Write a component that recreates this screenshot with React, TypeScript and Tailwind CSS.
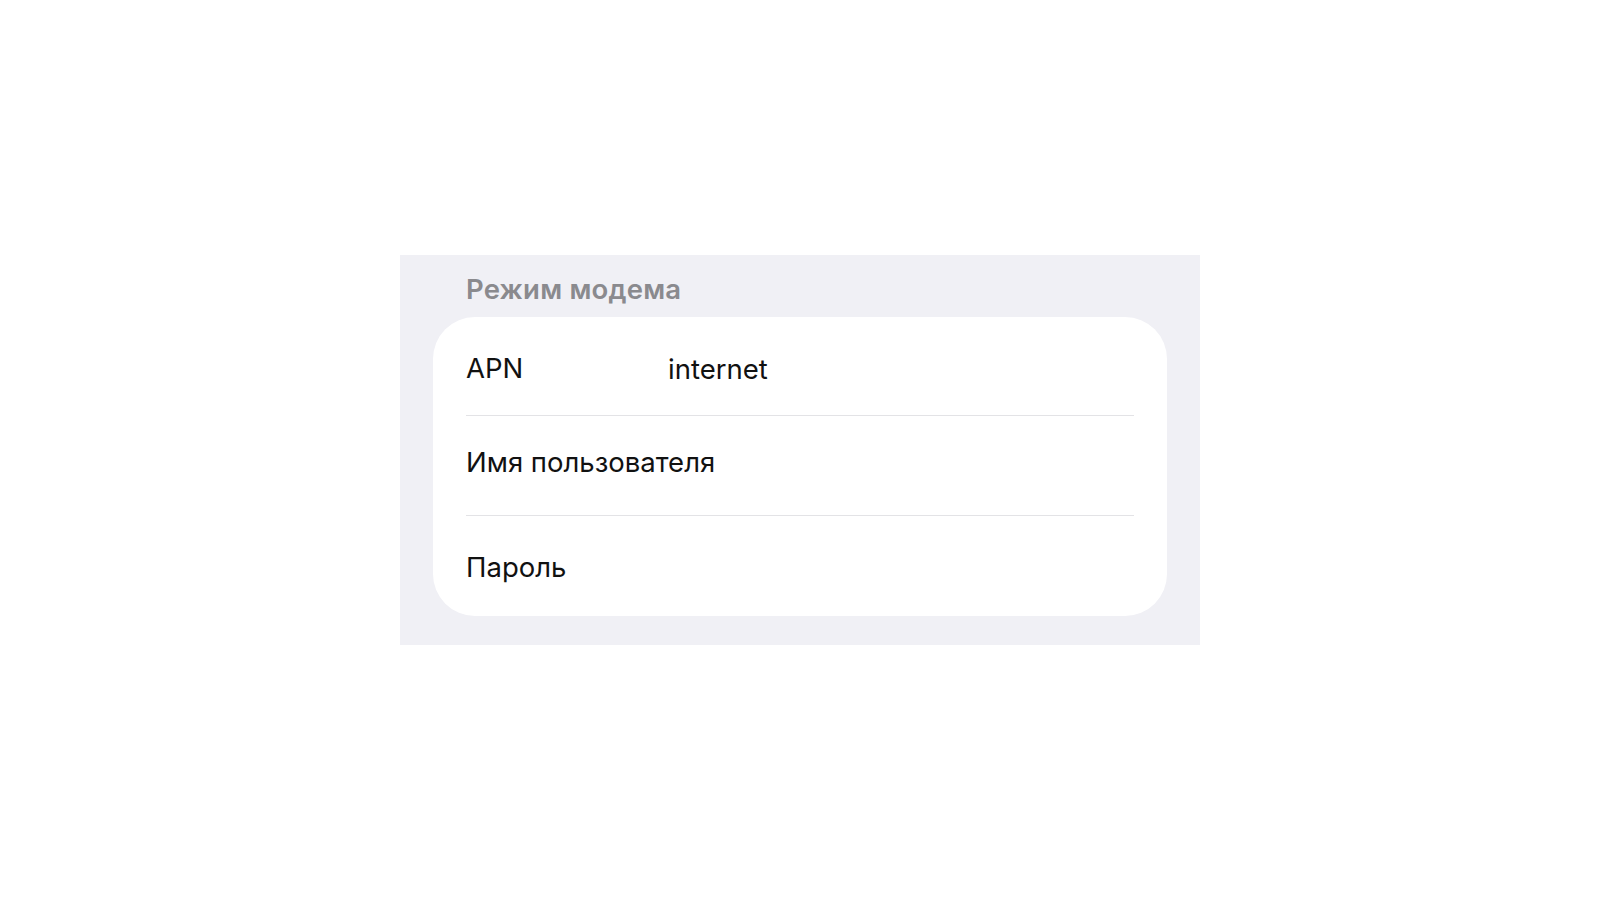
import React from "react";

export default function App() {
  const font = { fontFamily: "Inter, 'Noto Sans', sans-serif" };
  return (
    <div className="w-full h-screen bg-white flex items-center justify-center" style={font}>
      <div className="w-[800px] h-[390px] bg-[#f0f0f5] px-[33px] flex flex-col">
        <div className="pt-[17px] pl-[33px] h-[62px] text-[27.5px] leading-[34px] font-semibold text-[#8a8a8e] tracking-[0.2px]">
          Режим модема
        </div>
        <div className="bg-white rounded-[42px] px-[33px] flex flex-col">
          <div className="h-[99px] border-b border-[#e3e3e6] flex items-center pt-[4px]">
            <span className="w-[202px] text-[27.5px] leading-[34px] text-[#111]">APN</span>
            <span className="text-[27.5px] leading-[34px] text-[#111] pt-[2px]">internet</span>
          </div>
          <div className="h-[100px] border-b border-[#e3e3e6] flex items-center pb-[8px]">
            <span className="text-[27.5px] leading-[34px] text-[#111]">Имя пользователя</span>
          </div>
          <div className="h-[100px] flex items-center pt-[2px]">
            <span className="text-[27.5px] leading-[34px] text-[#111]">Пароль</span>
          </div>
        </div>
      </div>
    </div>
  );
}
